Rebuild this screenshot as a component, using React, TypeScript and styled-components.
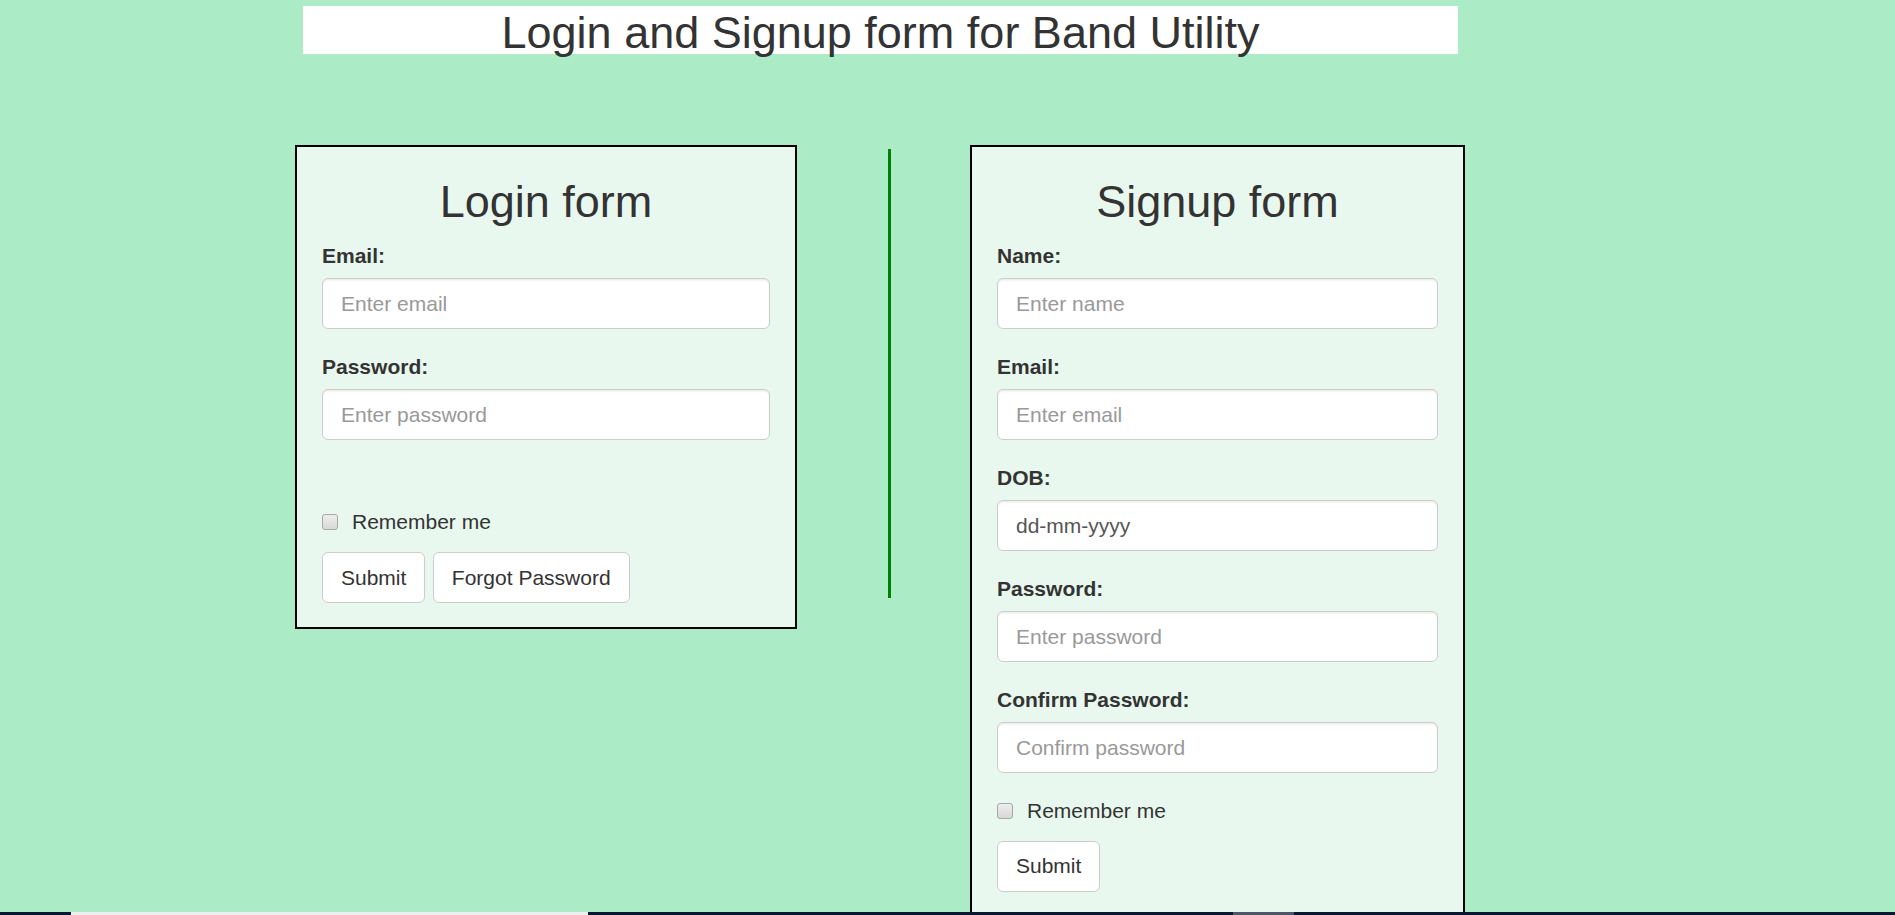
import React from "react";
import styled, { createGlobalStyle } from "styled-components";

const GlobalStyle = createGlobalStyle`
  html, body {
    margin: 0;
    padding: 0;
    overflow: hidden;
    background: #abebc6;
  }
  body {
    font-family: "Liberation Sans", Arial, Helvetica, sans-serif;
    font-size: 21px;
    line-height: 30px;
    color: #333;
  }
  * { box-sizing: border-box; }
`;

const Page = styled.div`
  width: 1895px;
  padding-top: 6px;
`;

const Title = styled.h2`
  margin: 0 0 0 303px;
  width: 1155px;
  height: 48px;
  padding-top: 4px;
  background: #ffffff;
  font-size: 45px;
  font-weight: 500;
  line-height: 45px;
  text-align: center;
  color: #333;
`;

const Row = styled.div`
  display: flex;
  align-items: flex-start;
  margin: 91px 0 0 295px;
`;

const Card = styled.div<{ $width: number }>`
  width: ${(p) => p.$width}px;
  flex: none;
  background: #e9f8ef;
  border: 2px solid #000;
  padding: 0 25px 24px 25px;
`;

const Divider = styled.div`
  flex: none;
  width: 3px;
  height: 449px;
  margin: 4px 79px 0 91px;
  background: #008000;
`;

const Heading = styled.h2`
  margin: 30px 0 14px;
  font-size: 45px;
  font-weight: 500;
  line-height: 49.5px;
  text-align: center;
  color: #333;
`;

const FormGroup = styled.div`
  margin-bottom: 22.5px;
`;

const Label = styled.label`
  display: inline-block;
  margin-bottom: 7.5px;
  font-weight: 700;
  font-size: 21px;
  line-height: 30px;
`;

const Input = styled.input<{ $filled?: boolean }>`
  display: block;
  width: 100%;
  height: 51px;
  padding: 9px 18px;
  font-family: inherit;
  font-size: 21px;
  line-height: 30px;
  color: #555;
  background: #fff;
  border: 1.5px solid #ccc;
  border-radius: 6px;
  box-shadow: inset 0 1.5px 1.5px rgba(0, 0, 0, 0.075);
  outline: none;
  &::placeholder {
    color: ${(p) => (p.$filled ? "#555" : "#999")};
    opacity: 1;
  }
`;

const CheckRow = styled.label<{ $top: number }>`
  display: flex;
  align-items: center;
  gap: 14px;
  margin: ${(p) => p.$top}px 0 15px;
  font-size: 21px;
  line-height: 30px;
  font-weight: 400;
`;

const Check = styled.input`
  appearance: none;
  -webkit-appearance: none;
  margin: 0;
  width: 16px;
  height: 16px;
  border: 1px solid #a8a8a8;
  border-radius: 3px;
  background: linear-gradient(#eeeeee, #d8d8d8);
  flex: none;
`;

const Buttons = styled.div`
  display: flex;
  gap: 7.5px;
`;

const Button = styled.button`
  height: 51px;
  padding: 9px 18px;
  font-family: inherit;
  font-size: 21px;
  line-height: 30px;
  color: #333;
  background: #fff;
  border: 1.5px solid #ccc;
  border-radius: 6px;
  cursor: pointer;
`;

const Taskbar = styled.div`
  position: fixed;
  left: 0;
  right: 0;
  bottom: 0;
  height: 3px;
  background: #0b1630;
`;

const TaskItem = styled.div<{ $left: number; $width: number; $color: string }>`
  position: absolute;
  top: 0;
  bottom: 0;
  left: ${(p) => p.$left}px;
  width: ${(p) => p.$width}px;
  background: ${(p) => p.$color};
`;

type Field = { label: string; placeholder: string; filled?: boolean };

const loginFields: Field[] = [
  { label: "Email:", placeholder: "Enter email" },
  { label: "Password:", placeholder: "Enter password" },
];

const signupFields: Field[] = [
  { label: "Name:", placeholder: "Enter name" },
  { label: "Email:", placeholder: "Enter email" },
  { label: "DOB:", placeholder: "dd-mm-yyyy", filled: true },
  { label: "Password:", placeholder: "Enter password" },
  { label: "Confirm Password:", placeholder: "Confirm password" },
];

function Fields({ fields }: { fields: Field[] }) {
  return (
    <>
      {fields.map((f) => (
        <FormGroup key={f.label}>
          <Label>{f.label}</Label>
          <Input placeholder={f.placeholder} $filled={f.filled} />
        </FormGroup>
      ))}
    </>
  );
}

export default function App() {
  return (
    <>
      <GlobalStyle />
      <Page>
        <Title>Login and Signup form for Band Utility</Title>
        <Row>
          <Card $width={502}>
            <Heading>Login form</Heading>
            <Fields fields={loginFields} />
            <CheckRow $top={67}>
              <Check type="checkbox" />
              Remember me
            </CheckRow>
            <Buttons>
              <Button>Submit</Button>
              <Button>Forgot Password</Button>
            </Buttons>
          </Card>
          <Divider />
          <Card $width={495}>
            <Heading>Signup form</Heading>
            <Fields fields={signupFields} />
            <CheckRow $top={0}>
              <Check type="checkbox" />
              Remember me
            </CheckRow>
            <Buttons>
              <Button>Submit</Button>
            </Buttons>
          </Card>
        </Row>
      </Page>
      <Taskbar>
        <TaskItem $left={71} $width={517} $color="#eeeeee" />
        <TaskItem $left={1233} $width={61} $color="#4f566a" />
      </Taskbar>
    </>
  );
}
